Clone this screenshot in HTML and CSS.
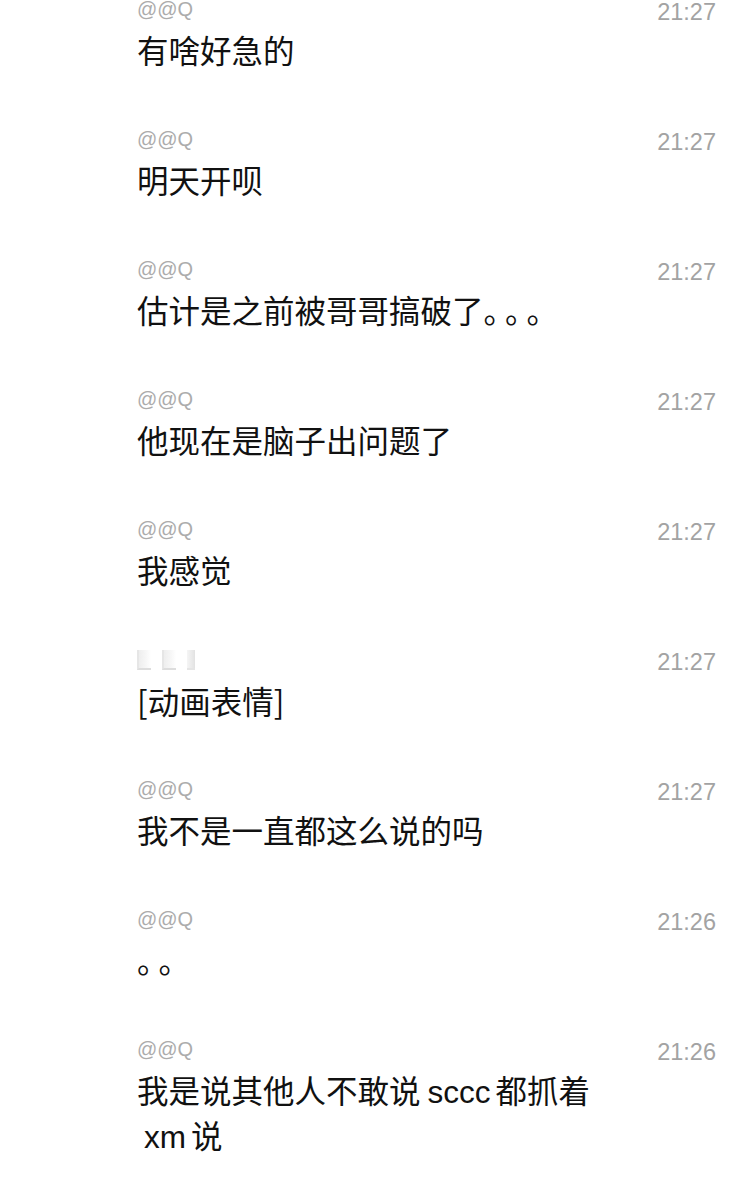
FILE: index.html
```html
<!DOCTYPE html>
<html lang="zh-CN">
<head>
  <meta charset="UTF-8">
  <title>聊天记录</title>
  <link rel="stylesheet" href="styles.css">
</head>
<body>
  <div class="chat">
    <div class="msg">
      <div class="body">
        <div class="name">@@Q</div>
        <div class="text">有啥好急的</div>
      </div>
      <div class="time">21:27</div>
    </div>
    <div class="msg">
      <div class="body">
        <div class="name">@@Q</div>
        <div class="text">明天开呗</div>
      </div>
      <div class="time">21:27</div>
    </div>
    <div class="msg">
      <div class="body">
        <div class="name">@@Q</div>
        <div class="text">估计是之前被哥哥搞破了<span class="punct">。。。</span></div>
      </div>
      <div class="time">21:27</div>
    </div>
    <div class="msg">
      <div class="body">
        <div class="name">@@Q</div>
        <div class="text">他现在是脑子出问题了</div>
      </div>
      <div class="time">21:27</div>
    </div>
    <div class="msg">
      <div class="body">
        <div class="name">@@Q</div>
        <div class="text">我感觉</div>
      </div>
      <div class="time">21:27</div>
    </div>
    <div class="msg">
      <div class="body">
        <!-- name hidden / blurred in the screenshot -->
        <div class="name blurred">
          <span class="blot"></span><span class="blot"></span><span class="blot short"></span>
        </div>
        <div class="text">[动画表情]</div>
      </div>
      <div class="time">21:27</div>
    </div>
    <div class="msg">
      <div class="body">
        <div class="name">@@Q</div>
        <div class="text">我不是一直都这么说的吗</div>
      </div>
      <div class="time">21:27</div>
    </div>
    <div class="msg">
      <div class="body">
        <div class="name">@@Q</div>
        <div class="text"><span class="punct">。。</span></div>
      </div>
      <div class="time">21:26</div>
    </div>
    <div class="msg">
      <div class="body">
        <div class="name">@@Q</div>
        <div class="text">我是说其他人不敢说<span class="latin">sccc</span>都抓着<span class="latin">xm</span>说</div>
      </div>
      <div class="time">21:26</div>
    </div>
  </div>
</body>
</html>
```

FILE: styles.css
```css
body {
  margin: 0;
  background: #fff;
  font-family: "Liberation Sans", "Noto Sans CJK SC", sans-serif;
  color: #111;
}

.chat {
  margin-top: -2px;
}

.msg {
  display: flex;
  justify-content: space-between;
  align-items: flex-start;
  height: 130px;
  padding: 0 34px 0 137px;
}

.body {
  width: 475px;
}

.name {
  height: 22px;
  font-size: 20px;
  line-height: 22px;
  color: #acacac;
}

.name.blurred {
  display: flex;
  gap: 11px;
  align-items: center;
  padding-top: 1px;
}

.blot {
  width: 12px;
  height: 18px;
  background: linear-gradient(90deg, #eee, #f7f7f7 60%, #fff);
  border-bottom: 2px solid #ddd;
  border-left: 2px solid #e6e6e6;
  filter: blur(0.7px);
}

.blot.short {
  width: 8px;
  background: linear-gradient(90deg, #f5f5f5, #e2e2e2);
  border-left: none;
  border-bottom-color: #e5e5e5;
}

.text {
  margin-top: 8px;
  font-family: "Noto Sans CJK SC", sans-serif;
  font-size: 31.5px;
  line-height: 42px;
  color: #111;
  text-spacing-trim: space-all;
}

.punct {
  letter-spacing: -10px;
}

.latin {
  font-family: "Liberation Sans", sans-serif;
  margin: 0 5px 0 7px;
}

.time {
  font-size: 23.5px;
  line-height: 26px;
  margin-top: 1px;
  color: #a3a3a3;
}
```
